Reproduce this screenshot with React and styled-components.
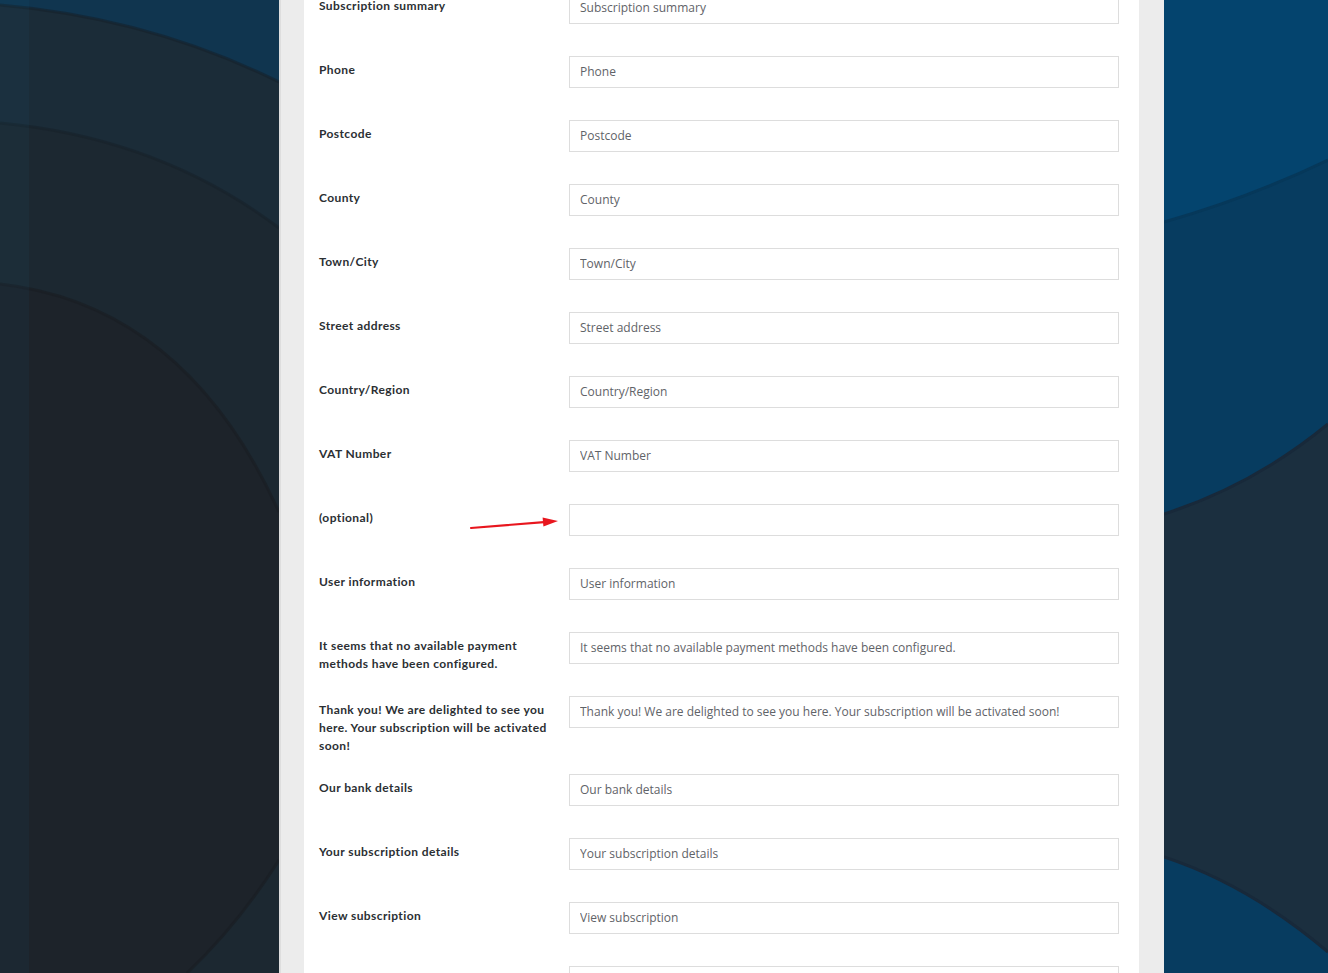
import React from 'react';
import styled, { createGlobalStyle } from 'styled-components';

const GlobalStyle = createGlobalStyle`
  html, body {
    margin: 0;
    padding: 0;
    height: 100%;
    overflow: hidden;
  }
  body {
    font-family: 'Open Sans', 'Liberation Sans', sans-serif;
  }
`;

const Page = styled.div`
  display: flex;
  width: 100%;
  height: 973px;
  overflow: hidden;
`;

const Side = styled.div`
  flex: ${(p) => (p.$grow ? '1 1 auto' : `0 0 ${p.$width}px`)};
  height: 100%;
  svg {
    display: block;
    width: 100%;
    height: 100%;
  }
`;

const Center = styled.div`
  flex: 0 0 885px;
  box-sizing: border-box;
  height: 100%;
  background: #ececec;
  border-left: 2px solid #dedede;
  padding: 0 25px 0 23px;
  display: flex;
`;

const Card = styled.div`
  flex: 1;
  background: #ffffff;
  padding: 0 20px 0 15px;
  overflow: hidden;
`;

const FormTable = styled.table`
  width: 100%;
  border-collapse: collapse;
  margin-top: -24px;
`;

const Label = styled.th`
  position: relative;
  width: 230px;
  padding: 21px 20px 3px 0;
  vertical-align: top;
  text-align: left;
  font-family: Lato, 'Open Sans', sans-serif;
  font-weight: 700;
  font-size: 12px;
  letter-spacing: 0.4px;
  line-height: 18px;
  color: #2b2f33;
`;

const Field = styled.td`
  padding: 16px 0;
  vertical-align: top;
`;

const TextInput = styled.input`
  display: block;
  box-sizing: border-box;
  width: 550px;
  height: 32px;
  margin: 0;
  padding: 0 10px 2px;
  border: 1px solid #dddddd;
  border-radius: 0;
  background: #ffffff;
  font-family: 'Open Sans', 'Liberation Sans', sans-serif;
  font-size: 12px;
  color: #5f6368;
  outline: none;
`;

const Arrow = styled.svg`
  position: absolute;
  left: 150px;
  top: 26px;
  width: 92px;
  height: 20px;
  overflow: visible;
`;

const rows = [
  { label: 'Subscription summary', value: 'Subscription summary' },
  { label: 'Phone', value: 'Phone' },
  { label: 'Postcode', value: 'Postcode' },
  { label: 'County', value: 'County' },
  { label: 'Town/City', value: 'Town/City' },
  { label: 'Street address', value: 'Street address' },
  { label: 'Country/Region', value: 'Country/Region' },
  { label: 'VAT Number', value: 'VAT Number' },
  { label: '(optional)', value: '', arrow: true },
  { label: 'User information', value: 'User information' },
  {
    label: 'It seems that no available payment methods have been configured.',
    value: 'It seems that no available payment methods have been configured.',
  },
  {
    label: 'Thank you! We are delighted to see you here. Your subscription will be activated soon!',
    value: 'Thank you! We are delighted to see you here. Your subscription will be activated soon!',
  },
  { label: 'Our bank details', value: 'Our bank details' },
  { label: 'Your subscription details', value: 'Your subscription details' },
  { label: 'View subscription', value: 'View subscription' },
  { label: '', value: '' },
];

function LeftArt() {
  return (
    <svg viewBox="0 0 279 973" preserveAspectRatio="none">
      <rect width="279" height="973" fill="#10354f" />
      <path d="M0,5 Q150,18 279,82 L279,973 L0,973 Z" fill="#1b2c38" />
      <path d="M0,5 Q150,18 279,82" fill="none" stroke="#15222c" strokeWidth="3" opacity="0.6" />
      <path d="M0,123 Q160,138 279,228 L279,973 L0,973 Z" fill="#1c2831" />
      <path d="M0,123 Q160,138 279,228" fill="none" stroke="#17212a" strokeWidth="3" opacity="0.6" />
      <path d="M0,284 Q185,305 279,512 L279,860 Q238,925 187,973 L0,973 Z" fill="#1d232a" />
      <path d="M0,284 Q185,305 279,512 M279,860 Q238,925 187,973" fill="none" stroke="#191e24" strokeWidth="3" opacity="0.7" />
      <rect width="29" height="973" fill="#1e6fa0" opacity="0.07" />
    </svg>
  );
}

function RightArt() {
  return (
    <svg viewBox="0 0 164 973" preserveAspectRatio="none">
      <rect width="164" height="973" fill="#04446e" />
      <path d="M0,222 Q85,198 164,160 L164,973 L0,973 Z" fill="#073c60" />
      <path d="M0,222 Q85,198 164,160" fill="none" stroke="#06385a" strokeWidth="3" />
      <path d="M0,514 Q90,485 164,424 L164,952 Q85,885 0,857 Z" fill="#1b2f3f" />
      <path d="M0,514 Q90,485 164,424 M164,952 Q85,885 0,857" fill="none" stroke="#18293a" strokeWidth="3" />
    </svg>
  );
}

export default function App() {
  return (
    <>
      <GlobalStyle />
      <Page>
        <Side $width={279}>
          <LeftArt />
        </Side>
        <Center>
          <Card>
            <FormTable>
              <tbody>
                {rows.map((row, i) => (
                  <tr key={i}>
                    <Label scope="row">
                      {row.label}
                      {row.arrow && (
                        <Arrow viewBox="0 0 92 20">
                          <line x1="2" y1="14" x2="75" y2="8.1" stroke="#e8161e" strokeWidth="2.2" strokeLinecap="round" />
                          <polygon points="89,7 74.4,12.6 73.6,3.6" fill="#e8161e" />
                        </Arrow>
                      )}
                    </Label>
                    <Field>
                      <TextInput type="text" defaultValue={row.value} readOnly />
                    </Field>
                  </tr>
                ))}
              </tbody>
            </FormTable>
          </Card>
        </Center>
        <Side $grow>
          <RightArt />
        </Side>
      </Page>
    </>
  );
}
